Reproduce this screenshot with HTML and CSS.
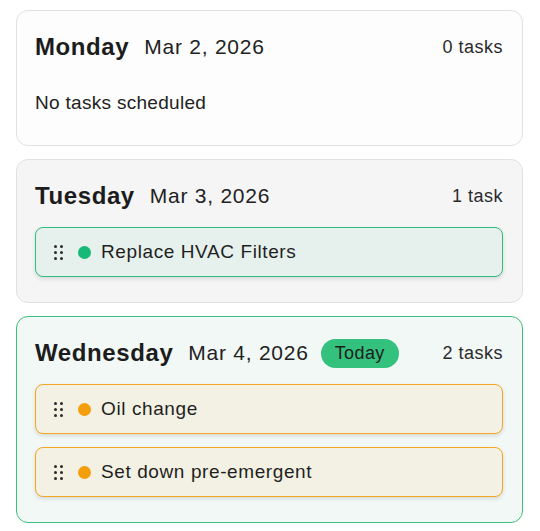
FILE: index.html
```html
<!DOCTYPE html>
<html lang="en">
<head>
<meta charset="utf-8">
<title>Week</title>
<link rel="stylesheet" href="styles.css">
</head>
<body>
<main class="week">
  <section class="day">
    <header class="day-head">
      <h2 class="day-name">Monday</h2>
      <span class="day-date">Mar 2, 2026</span>
      <span class="day-count">0 tasks</span>
    </header>
    <p class="empty">No tasks scheduled</p>
  </section>

  <section class="day day-past">
    <header class="day-head">
      <h2 class="day-name">Tuesday</h2>
      <span class="day-date">Mar 3, 2026</span>
      <span class="day-count">1 task</span>
    </header>
    <ul class="tasks">
      <li class="task task-green">
        <span class="handle"><i></i><i></i><i></i><i></i><i></i><i></i></span>
        <span class="dot"></span>
        <span class="task-title">Replace HVAC Filters</span>
      </li>
    </ul>
  </section>

  <section class="day day-today">
    <header class="day-head">
      <h2 class="day-name">Wednesday</h2>
      <span class="day-date">Mar 4, 2026</span>
      <span class="badge">Today</span>
      <span class="day-count">2 tasks</span>
    </header>
    <ul class="tasks">
      <li class="task task-orange">
        <span class="handle"><i></i><i></i><i></i><i></i><i></i><i></i></span>
        <span class="dot"></span>
        <span class="task-title">Oil change</span>
      </li>
      <li class="task task-orange">
        <span class="handle"><i></i><i></i><i></i><i></i><i></i><i></i></span>
        <span class="dot"></span>
        <span class="task-title">Set down pre-emergent</span>
      </li>
    </ul>
  </section>
</main>
</body>
</html>
```
FILE: styles.css
```css
* { box-sizing: border-box; }

body {
  margin: 0;
  background: #ffffff;
  font-family: "Liberation Sans", Arial, sans-serif;
  color: #1f1f1f;
}

.week {
  display: flex;
  flex-direction: column;
  gap: 13px;
  padding: 10px 17px 0 16px;
}

.day {
  background: #fdfdfd;
  border: 1px solid #e1e1e1;
  border-radius: 12px;
  padding: 21px 19px 25px 18px;
}

.day-past { background: #f5f5f5; }

.day-today {
  background: #f2f8f6;
  border-color: #3dbf7f;
}

.day-head {
  display: flex;
  align-items: center;
  height: 30px;
  margin-bottom: 16px;
}

.day-name {
  margin: 0;
  font-size: 24px;
  font-weight: 700;
  letter-spacing: 0.6px;
  color: #1c1c1c;
}

.day-date {
  margin-left: 15px;
  font-size: 21px;
  letter-spacing: 0.75px;
  color: #222;
}

.badge {
  margin-left: 12px;
  background: #33c17d;
  color: #1c1c1c;
  font-size: 18px;
  letter-spacing: 0.4px;
  border-radius: 15px;
  height: 29px;
  line-height: 29px;
  padding: 0 14px;
}

.day-count {
  margin-left: auto;
  font-size: 18px;
  letter-spacing: 0.5px;
  color: #2a2a2a;
}

.empty {
  margin: 0;
  padding: 13px 0 5px;
  font-size: 19px;
  line-height: 24px;
  letter-spacing: 0.3px;
  color: #222;
}

.tasks {
  list-style: none;
  margin: 0;
  padding: 0;
  display: flex;
  flex-direction: column;
  gap: 13px;
}

.task {
  display: flex;
  align-items: center;
  height: 50px;
  padding-left: 18px;
  border: 1px solid;
  border-radius: 8px;
  box-shadow: 0 2px 4px rgba(0, 0, 0, 0.12);
}

.task-green {
  background: #e6f0ec;
  border-color: #2fbe7d;
}

.task-orange {
  background: #f3f1e3;
  border-color: #f5a623;
}

.handle {
  display: grid;
  grid-template-columns: 3px 3px;
  grid-auto-rows: 3px;
  column-gap: 3px;
  row-gap: 3px;
  width: 10px;
}

.handle i {
  display: block;
  width: 3px;
  height: 3px;
  border-radius: 50%;
  background: #2b2b2b;
}

.dot {
  width: 13px;
  height: 13px;
  border-radius: 50%;
  margin-left: 14px;
  margin-right: 10px;
}

.task-green .dot { background: #17b978; }
.task-orange .dot { background: #f59e0b; }

.task-title {
  font-size: 19px;
  letter-spacing: 0.6px;
  color: #1f1f1f;
}
```
